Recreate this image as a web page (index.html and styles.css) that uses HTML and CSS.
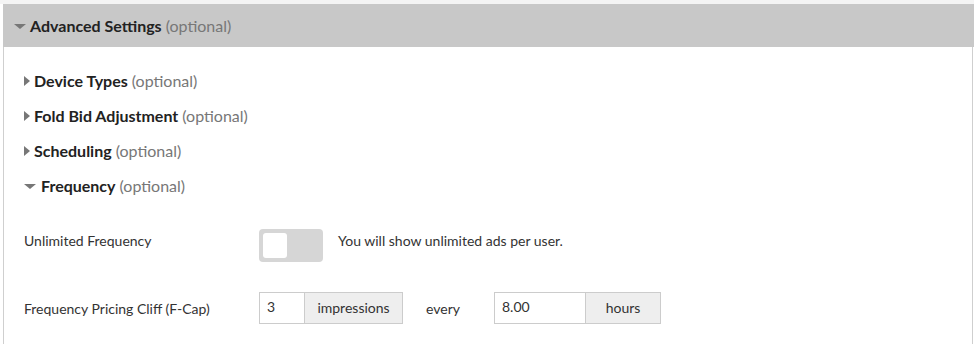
FILE: index.html
```html
<!DOCTYPE html>
<html>
<head>
<meta charset="utf-8">
<link rel="stylesheet" href="styles.css">
</head>
<body>
<div class="topstrip"></div>
<div class="panel">
  <div class="panel-head">
    <span class="caret-down"></span><span class="title">Advanced Settings</span> <span class="opt">(optional)</span>
  </div>
  <div class="panel-body">
    <div class="sec"><span class="caret-right"></span><span class="title">Device Types</span> <span class="opt">(optional)</span></div>
    <div class="sec"><span class="caret-right"></span><span class="title">Fold Bid Adjustment</span> <span class="opt">(optional)</span></div>
    <div class="sec"><span class="caret-right"></span><span class="title">Scheduling</span> <span class="opt">(optional)</span></div>
    <div class="sec"><span class="caret-down small"></span><span class="title">Frequency</span> <span class="opt">(optional)</span></div>
    <div class="row row-toggle">
      <div class="label">Unlimited Frequency</div>
      <div class="toggle"><span class="knob"></span></div>
      <div class="hint">You will show unlimited ads per user.</div>
    </div>
    <div class="row row-cap">
      <div class="label">Frequency Pricing Cliff (F-Cap)</div>
      <div class="group">
        <div class="inp w46">3</div><div class="addon w98">impressions</div>
      </div>
      <div class="every">every</div>
      <div class="group">
        <div class="inp w92">8.00</div><div class="addon w75">hours</div>
      </div>
    </div>
  </div>
</div>
</body>
</html>
```
FILE: styles.css
```css
html, body { margin: 0; padding: 0; background: #fff; }
body { font-family: Lato, "Open Sans", sans-serif; color: #222; width: 974px; height: 344px; overflow: hidden; }
.topstrip { height: 4px; background: #f4f4f4; }
.panel { margin-left: 3px; width: 968px; border-left: 1px solid #cfcfcf; border-right: 1px solid #cfcfcf; height: 340px; }
.panel-head { background: #c8c8c8; height: 43px; margin-left: -1px; margin-right: -2px; display: flex; align-items: center; padding-left: 11px; font-size: 16px; }
.panel-head .title { font-weight: 700; }
.opt { color: #777; font-weight: 400; margin-left: 4px; font-size: 16px; }
.caret-down { width: 0; height: 0; border-left: 6px solid transparent; border-right: 6px solid transparent; border-top: 5px solid #777; margin-right: 4px; margin-top: 2px; }
.caret-down.small { margin-right: 5px; }
.caret-right { width: 0; height: 0; border-top: 5px solid transparent; border-bottom: 5px solid transparent; border-left: 6px solid #777; margin-right: 4px; }
.panel-body { padding: 16px 0 0 20px; }
.sec { height: 35px; display: flex; align-items: center; font-size: 16px; }
.sec .title { font-weight: 700; }
.row { display: flex; align-items: center; font-size: 14px; color: #333; }
.label { width: 235px; }
.row-toggle { margin-top: 26px; height: 33px; }
.row-toggle .label, .row-toggle .hint { margin-top: -11px; }
.toggle { width: 64px; height: 33px; background: #d6d6d6; border-radius: 4px; box-sizing: border-box; padding: 4px; }
.knob { display: block; width: 24px; height: 25px; background: #fff; border-radius: 3px; }
.hint { margin-left: 15px; }
.row-cap { margin-top: 30px; height: 32px; }
.group { display: flex; height: 32px; }
.inp, .addon { box-sizing: border-box; border: 1px solid #ccc; height: 32px; display: flex; align-items: center; }
.inp { background: #fff; padding: 0 0 3px 7px; }
.addon { background: #eee; border-left: none; justify-content: center; padding-bottom: 1px; }
.w46 { width: 46px; }
.w98 { width: 98px; }
.w92 { width: 92px; }
.w75 { width: 75px; }
.every { width: 91px; box-sizing: border-box; padding-left: 23px; padding-top: 1px; }
```
